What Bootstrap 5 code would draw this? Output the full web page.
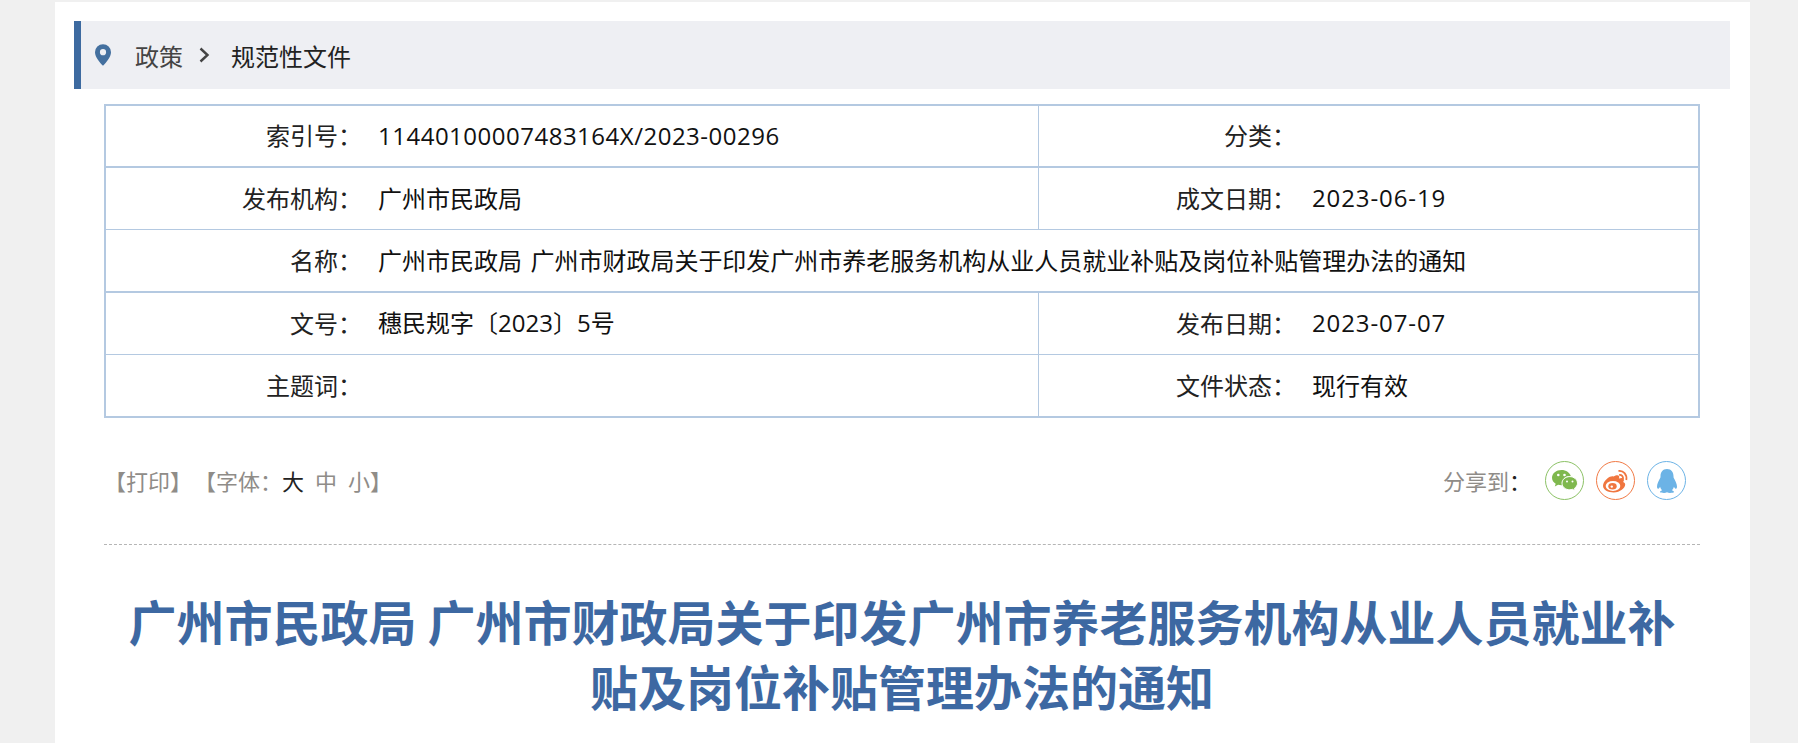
<!DOCTYPE html>
<html lang="zh-CN">
<head>
  <meta charset="UTF-8">
  <meta name="viewport" content="width=device-width, initial-scale=1">
  <title>规范性文件</title>
  <link href="https://cdn.jsdelivr.net/npm/bootstrap@5.3.3/dist/css/bootstrap.min.css" rel="stylesheet">
  <style>
    body { background: #f0f0f0; padding: 2px 48px 0 55px; font-family: "Noto Sans CJK SC", sans-serif; color: #222; font-size: 24px; text-spacing-trim: space-all; }
    .page-panel { background: #fff; min-height: 741px; padding: 19px 20px 0 19px; }
    .crumb-bar { height: 68px; background: #eeeff3; border-left: 7px solid #3d6aa0; padding-left: 14px; }
    .crumb-bar span { padding-top: 2px; }
    .crumb-first { color: #444; margin-left: 24px; }
    .crumb-arrow { margin: 0 21px 0 16px; }
    .doc-wrap { padding: 15px 30px 0 30px; }
    .meta-table { table-layout: fixed; width: 100%; border-collapse: collapse; border: 2px solid #b4c9e1; }
    .meta-table td { border: 1px solid #b4c9e1; height: 62.4px; padding: 0 0 2px; vertical-align: middle; line-height: 1; }
    .meta-table .meta-name { text-align: right; border-right: 0; }
    .meta-table .meta-value { padding-left: 16px; border-left: 0; color: #111; }
    .meta-table .row-thick td { border-top-width: 2px; }
    .meta-num { font-family: "Open Sans", "Noto Sans CJK SC", sans-serif; letter-spacing: .5px; }
    .meta-date { font-family: "Open Sans", "Noto Sans CJK SC", sans-serif; letter-spacing: .9px; }
    .meta-short { font-family: "Open Sans", "Noto Sans CJK SC", sans-serif; }
    .meta-title { word-spacing: 3px; }
    .tool-row { height: 127px; border-bottom: 1px dashed #b5b5b5; font-size: 22px; color: #8f8c88; padding-right: 14px; }
    .tool-row .tool-group { margin-right: 2px; }
    .tool-row .size-big { color: #222; }
    .tool-row .size-gap { margin-left: 11px; }
    .share-label { margin-right: 2px; }
    .share-label b { color: #222; font-weight: 400; }
    .share-btn { width: 39px; height: 39px; border-radius: 50%; border: 1px solid; margin-left: 12px; }
    .share-wx { border-color: #8cc266; }
    .share-wb { border-color: #f17a45; }
    .share-qq { border-color: #6cb3e6; }
    .doc-title { font-size: 48px; font-weight: 700; line-height: 65px; color: #3d68a2; text-align: center; margin: 43px 0 0; padding: 0 10px; font-family: "Noto Sans CJK SC", sans-serif; }
  </style>
</head>
<body>
  <div class="page-panel">
    <div class="crumb-bar d-flex align-items-center">
      <svg width="16" height="22" viewBox="0 0 17 23"><path fill="#44709f" fill-rule="evenodd" d="M8.500 0A8.500 8.500 0 0 0 0 8.500C0 13.500 5 19.500 8.500 23 12 19.500 17 13.500 17 8.500A8.500 8.500 0 0 0 8.500 0zm0 5.200a3.300 3.300 0 1 1 0 6.600 3.300 3.300 0 0 1 0-6.600z"/></svg>
      <span class="crumb-first">政策</span>
      <svg class="crumb-arrow" width="11" height="16" viewBox="0 0 11 16"><path fill="none" stroke="#444" stroke-width="2.400" d="M1.500 1.500 8.500 8l-7 6.500"/></svg>
      <span>规范性文件</span>
    </div>

    <div class="doc-wrap">
      <table class="meta-table">
        <colgroup>
          <col style="width: 257px"><col style="width: 676px"><col style="width: 258px"><col>
        </colgroup>
        <tr>
          <td class="meta-name">索引号：</td>
          <td class="meta-value"><span class="meta-num">11440100007483164X/2023-00296</span></td>
          <td class="meta-name">分类：</td>
          <td class="meta-value"></td>
        </tr>
        <tr class="row-thick">
          <td class="meta-name">发布机构：</td>
          <td class="meta-value">广州市民政局</td>
          <td class="meta-name">成文日期：</td>
          <td class="meta-value"><span class="meta-date">2023-06-19</span></td>
        </tr>
        <tr>
          <td class="meta-name">名称：</td>
          <td class="meta-value meta-title" colspan="3">广州市民政局 广州市财政局关于印发广州市养老服务机构从业人员就业补贴及岗位补贴管理办法的通知</td>
        </tr>
        <tr class="row-thick">
          <td class="meta-name">文号：</td>
          <td class="meta-value">穗民规字〔<span class="meta-short">2023</span>〕<span class="meta-short">5</span>号</td>
          <td class="meta-name">发布日期：</td>
          <td class="meta-value"><span class="meta-date">2023-07-07</span></td>
        </tr>
        <tr>
          <td class="meta-name">主题词：</td>
          <td class="meta-value"></td>
          <td class="meta-name">文件状态：</td>
          <td class="meta-value">现行有效</td>
        </tr>
      </table>

      <div class="tool-row d-flex align-items-center justify-content-between">
        <div class="d-flex">
          <span class="tool-group">【打印】</span>
          <span>【字体：<span class="size-big">大</span><span class="size-gap">中</span><span class="size-gap">小</span>】</span>
        </div>
        <div class="d-flex align-items-center">
          <span class="share-label">分享到<b>：</b></span>
          <span class="share-btn share-wx d-flex align-items-center justify-content-center">
            <svg width="26" height="22" viewBox="0 0 26 22">
              <path fill="#7fb84e" d="M9.500 0C4.300 0 0 3.400 0 7.700c0 2.500 1.400 4.500 3.700 6L2.800 16.500l3.300-1.700c1.200.3 2.200.5 3.400.5h.8a7 7 0 0 1-.3-2c0-4 3.500-7.200 8-7.200h.8C17.900 2.600 14.100 0 9.500 0z"/>
              <path fill="#7fb84e" stroke="#fff" stroke-width="1" d="M25.500 13.200c0-3.600-3.600-6.600-7.700-6.600-4.400 0-7.800 3-7.800 6.600 0 3.700 3.400 6.600 7.800 6.600.9 0 1.800-.2 2.700-.5l2.600 1.500-.7-2.400c1.900-1.400 3.100-3.100 3.100-5.200z"/>
              <circle cx="6.300" cy="5" r="1.300" fill="#fff"/><circle cx="12.500" cy="5" r="1.300" fill="#fff"/>
              <circle cx="15" cy="11.500" r="1" fill="#fff"/><circle cx="20.500" cy="11.500" r="1" fill="#fff"/>
            </svg>
          </span>
          <span class="share-btn share-wb d-flex align-items-center justify-content-center">
            <svg width="26" height="24" viewBox="0 0 26 24">
              <path fill="#f0763f" fill-rule="evenodd" d="M10.500 7.500c2.500-1.500 4.800-1.700 5.500-.6.400.7.300 1.600-.1 2.600 2.300-.9 4.200-.8 4.800.4.500 1 .2 2-.6 3 1.300.5 2.100 1.400 2.100 2.700 0 3.600-5.100 7.900-11.500 7.900C5.200 23.500 0 21 0 16.800c0-2.500 1.700-5.300 4.300-7.300 2.200-1.700 4.400-2.600 6.200-2z"/>
              <ellipse cx="10" cy="17" rx="7.300" ry="5" fill="#fff"/>
              <ellipse cx="9.500" cy="17.300" rx="4.200" ry="3.300" fill="#f0763f"/>
              <circle cx="8.800" cy="17.600" r="1.200" fill="#fff"/>
              <path fill="none" stroke="#f0763f" stroke-width="1.800" d="M15.500 2c4.800-.8 8.800 3.500 7.800 9M16.200 6c2.400-.4 4.200 1.600 3.800 4"/>
            </svg>
          </span>
          <span class="share-btn share-qq d-flex align-items-center justify-content-center">
            <svg width="22" height="24" viewBox="0 0 22 24">
              <path fill="#6cb3e6" d="M11 0C6.500 0 4.500 3.500 4.500 7.200c0 .8 0 1.300-.3 1.900C2.800 11.700 1 15 1 17.500c0 2 .9 2.600 1.800 1.900.5-.4.900-1 1.300-1.700.3 1.500 1.100 2.700 2 3.500-1.500.6-2.300 1.200-2.100 1.900.2.700 2 .9 4 .9 1.200 0 2.200-.3 3-.7.800.4 1.800.7 3 .7 2 0 3.800-.2 4-.9.200-.7-.6-1.300-2.100-1.900.9-.8 1.700-2 2-3.500.4.700.8 1.300 1.300 1.700.9.700 1.800.1 1.800-1.900 0-2.500-1.800-5.800-3.200-8.400-.3-.6-.3-1.100-.3-1.900C17.500 3.500 15.500 0 11 0z"/>
            </svg>
          </span>
        </div>
      </div>

      <h1 class="doc-title">广州市民政局 广州市财政局关于印发广州市养老服务机构从业人员就业补贴及岗位补贴管理办法的通知</h1>
    </div>
  </div>

  <script src="https://cdn.jsdelivr.net/npm/bootstrap@5.3.3/dist/js/bootstrap.bundle.min.js"></script>
</body>
</html>
